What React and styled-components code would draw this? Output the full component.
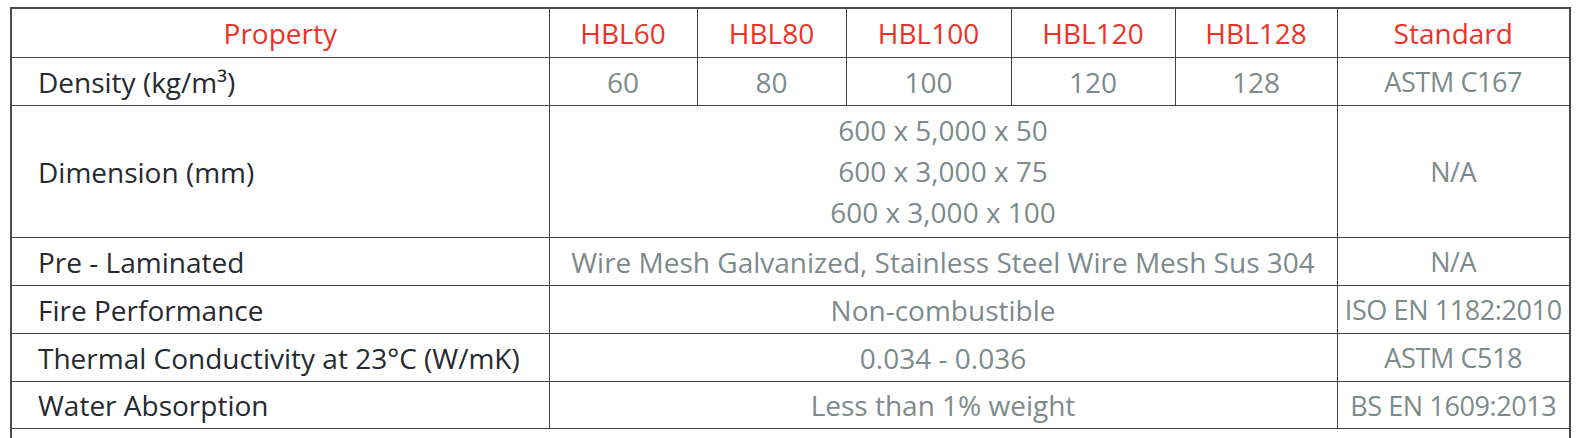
import React from 'react'
import styled, { createGlobalStyle } from 'styled-components'

/*-----------------------------------------------------------------------------
  Global
------------------------------------------------------------------------------*/
const GlobalStyle = createGlobalStyle`
  body {
    margin: 0;
    background: #ffffff;
    font-family: "Open Sans", "Noto Sans", sans-serif;
  }
`

/*-----------------------------------------------------------------------------
  Wrapper
------------------------------------------------------------------------------*/
const Wrapper = styled.div`
  padding: 7px 0 0 10px;
  overflow: hidden;
  height: 438px;
  box-sizing: border-box;
`

/*-----------------------------------------------------------------------------
  Table
------------------------------------------------------------------------------*/
const SpecTable = styled.table`
  width: 1561px;
  border-collapse: collapse;
  border: 2px solid #4a4a4a;
  table-layout: fixed;
  font-size: 28px;
  font-weight: 500;
`

const HeadCell = styled.th`
  height: 48px;
  padding: 0;
  border: 1px solid #424242;
  font-weight: 500;
  text-align: center;
  color: #ec3226;
`

const Row = styled.tr`
  height: ${({ $height }) => $height || 48}px;
`

const Label = styled.td`
  padding: 0 0 0 26px;
  border: 1px solid #424242;
  color: #262930;
  text-align: left;
  white-space: nowrap;
`

const Value = styled.td`
  padding: ${({ $multi }) => ($multi ? '4px 0' : '0')};
  border: 1px solid #424242;
  color: #7d8a8b;
  text-align: center;
  white-space: nowrap;
  line-height: ${({ $multi }) => ($multi ? '41px' : 'normal')};
  font-size: ${({ $standard }) => ($standard ? '27px' : 'inherit')};
  letter-spacing: ${({ $standard }) => ($standard ? '-0.4px' : 'normal')};
`

const Note = styled.td`
  padding: 3px 0 0 26px;
  border: 1px solid #424242;
  color: #7d8a8b;
  text-align: left;
  vertical-align: top;
  line-height: 40px;
`

const columns = [538, 148, 149, 165, 164, 162, 233]
const grades = ['HBL60', 'HBL80', 'HBL100', 'HBL120', 'HBL128']
const densities = ['60', '80', '100', '120', '128']

const rows = [
  { label: 'Pre - Laminated', value: 'Wire Mesh Galvanized, Stainless Steel Wire Mesh Sus 304', standard: 'N/A' },
  { label: 'Fire Performance', value: 'Non-combustible', standard: 'ISO EN 1182:2010' },
  { label: 'Thermal Conductivity at 23°C (W/mK)', value: '0.034 - 0.036', standard: 'ASTM C518' },
  { label: 'Water Absorption', value: 'Less than 1% weight', standard: 'BS EN 1609:2013', height: 47 },
]

export default function App() {
  return (
    <>
      <GlobalStyle />
      <Wrapper>
        <SpecTable>
          <colgroup>
            {columns.map((w, i) => <col key={i} style={{ width: w }} />)}
          </colgroup>
          <thead>
            <Row $height={49}>
              <HeadCell>Property</HeadCell>
              {grades.map((g) => <HeadCell key={g}>{g}</HeadCell>)}
              <HeadCell>Standard</HeadCell>
            </Row>
          </thead>
          <tbody>
            <Row>
              <Label>Density (kg/m³)</Label>
              {densities.map((d) => <Value key={d}>{d}</Value>)}
              <Value $standard>ASTM C167</Value>
            </Row>
            <Row $height={131}>
              <Label>Dimension (mm)</Label>
              <Value colSpan={5} $multi>
                600 x 5,000 x 50<br />
                600 x 3,000 x 75<br />
                600 x 3,000 x 100
              </Value>
              <Value $standard>N/A</Value>
            </Row>
            {rows.map((r) => (
              <Row key={r.label} $height={r.height}>
                <Label>{r.label}</Label>
                <Value colSpan={5}>{r.value}</Value>
                <Value $standard>{r.standard}</Value>
              </Row>
            ))}
            <Row>
              <Note colSpan={7}>
                Tỷ trọng và kích thước có thể thay đổi theo yêu cầu của khách hàng, vui lòng liên hệ để được tư vấn chi tiết về sản phẩm.
              </Note>
            </Row>
          </tbody>
        </SpecTable>
      </Wrapper>
    </>
  )
}
